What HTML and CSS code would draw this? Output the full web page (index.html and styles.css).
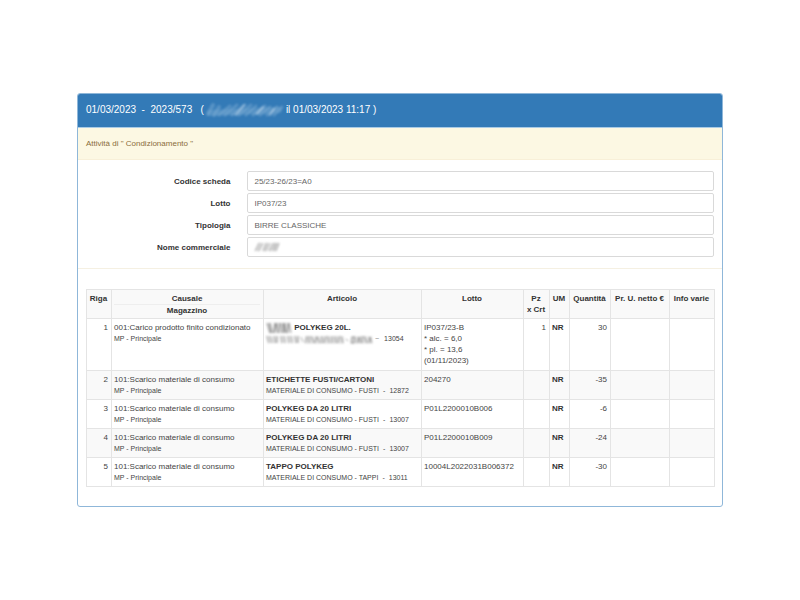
FILE: index.html
```html
<!DOCTYPE html>
<html lang="it">
<head>
<meta charset="utf-8">
<meta name="viewport" content="width=device-width, initial-scale=1">
<title>Scheda 2023/573</title>
<link rel="stylesheet" href="styles.css">
</head>
<body>
<main class="panel">
  <h1 class="panel-heading">01/03/2023 &nbsp;-&nbsp; 2023/573 &nbsp; (<svg class="mask mask-user" viewBox="0 0 80 16" aria-hidden="true"><g fill="none" stroke="#8fb8dc" stroke-linecap="round"><path d="M3 12L8 3M9 13L14 5" stroke-width="4" opacity=".4"/><path d="M5 11L74 8" stroke-width="6" opacity=".3"/><path d="M14 13L25 4M20 13L32 3M27 13L40 3M34 13L46 3M41 13L51 4M48 13L60 4M55 13L65 5M62 13L72 5M69 13L77 5" stroke-width="3" opacity=".4"/><path d="M31 13L39 3M52 12L58 5M65 13L69 7" stroke="#e3eef8" stroke-width="2" opacity=".45"/></g></svg>il 01/03/2023 11:17 )</h1>
  <p class="notice">Attività di " Condizionamento "</p>
  <form class="details">
    <div class="field"><label for="codice">Codice scheda</label><input id="codice" type="text" value="25/23-26/23=A0" readonly></div>
    <div class="field"><label for="lotto">Lotto</label><input id="lotto" type="text" value="IP037/23" readonly></div>
    <div class="field"><label for="tipologia">Tipologia</label><input id="tipologia" type="text" value="BIRRE CLASSICHE" readonly></div>
    <div class="field"><label for="nome">Nome commerciale</label><div class="masked-input"><input id="nome" type="text" readonly><svg class="mask mask-name" viewBox="0 0 26 12" aria-hidden="true"><g fill="none" stroke="#888"><path d="M1 10L5 2M5 10L9 2M9 10L12 2M12 10L16 2M15 10L19 2M19 10L22 2M22 10L25 2" opacity=".75"/><path d="M3 10L7 2M10 10L14 2M16 10L21 2M20 10L24 2" stroke-width="3" opacity=".3"/></g></svg></div></div>
  </form>
  <div class="table-wrap">
    <table>
      <colgroup><col class="c-riga"><col class="c-causale"><col class="c-articolo"><col class="c-lotto"><col class="c-pz"><col class="c-um"><col class="c-qta"><col class="c-prezzo"><col class="c-info"></colgroup>
      <thead>
        <tr><th>Riga</th><th><span class="split">Causale</span>Magazzino</th><th>Articolo</th><th>Lotto</th><th>Pz<br>x Crt</th><th>UM</th><th>Quantità</th><th>Pr. U. netto €</th><th>Info varie</th></tr>
      </thead>
      <tbody>
        <tr class="tall"><td class="num">1</td><td>001:Carico prodotto finito condizionato<small>MP - Principale</small></td><td><b><svg class="mask mask-item" viewBox="0 0 26 12" aria-hidden="true"><g fill="none" stroke="#555"><path d="M1 1L4 11M4 1L6 11M8 11L10 1M10 1L12 11M14 1L15 11M17 11L18 1M18 1L20 11M22 11L23 1M23 1L25 11" opacity=".65"/><path d="M3 1L5 11M9 1L8 11M13 1L12 11M16 1L18 11M21 1L20 11" stroke-width="3" opacity=".3"/></g></svg> POLYKEG 20L.</b><small><svg class="mask mask-category" viewBox="0 0 106 9" aria-hidden="true"><g fill="none" stroke="#777"><path d="M1 1L3 8M4 1L6 8M8 1L9 8M11 1V8M15 1L16 8M18 1L19 8M22 1L23 8M25 1L26 8M29 1L30 8M32 1V8" stroke-width="2" opacity=".5"/><path d="M35 2L37 7M39 8L41 1M43 1V8M45 1L48 8M51 1L49 8M51 2L54 8M56 1V8M60 1L58 8M62 1L63 8M66 1V8M69 1L70 8M73 1L72 8M75 1L77 8" opacity=".65"/><path d="M80 4L82 6M85 8L86 2L89 2L88 8ZM91 8L93 2L94 8M96 1V8M98 1L101 8M103 8L104 2L106 8" opacity=".75"/><path d="M39 5H78M85 5H106" stroke-width="7" opacity=".22"/></g></svg><i class="dash">~</i>13054</small></td><td>IP037/23-B<br>* alc. = 6,0<br>* pl. = 13,6<br>(01/11/2023)</td><td class="num">1</td><td><b>NR</b></td><td class="num">30</td><td></td><td></td></tr>
        <tr><td class="num">2</td><td>101:Scarico materiale di consumo<small>MP - Principale</small></td><td><b>ETICHETTE FUSTI/CARTONI</b><small>MATERIALE DI CONSUMO - FUSTI<span class="sep">-</span>12872</small></td><td>204270</td><td></td><td><b>NR</b></td><td class="num">-35</td><td></td><td></td></tr>
        <tr><td class="num">3</td><td>101:Scarico materiale di consumo<small>MP - Principale</small></td><td><b>POLYKEG DA 20 LITRI</b><small>MATERIALE DI CONSUMO - FUSTI<span class="sep">-</span>13007</small></td><td>P01L2200010B006</td><td></td><td><b>NR</b></td><td class="num">-6</td><td></td><td></td></tr>
        <tr><td class="num">4</td><td>101:Scarico materiale di consumo<small>MP - Principale</small></td><td><b>POLYKEG DA 20 LITRI</b><small>MATERIALE DI CONSUMO - FUSTI<span class="sep">-</span>13007</small></td><td>P01L2200010B009</td><td></td><td><b>NR</b></td><td class="num">-24</td><td></td><td></td></tr>
        <tr><td class="num">5</td><td>101:Scarico materiale di consumo<small>MP - Principale</small></td><td><b>TAPPO POLYKEG</b><small>MATERIALE DI CONSUMO - TAPPI<span class="sep">-</span>13011</small></td><td>10004L2022031B006372</td><td></td><td><b>NR</b></td><td class="num">-30</td><td></td><td></td></tr>
      </tbody>
    </table>
  </div>
</main>
</body>
</html>
```
FILE: styles.css
```css
* { box-sizing: border-box; }
body {
  margin: 0;
  padding: 93px 77px;
  background: #fff;
  color: #444;
  font: 8px/11px "Liberation Sans", Arial, sans-serif;
}
.panel {
  border: 1px solid #8fb7d9;
  border-radius: 3px;
  overflow: hidden;
}
.panel-heading {
  margin: -1px -1px 0;
  padding: 10px 9px;
  background: #337ab7;
  border-bottom: 1px solid #a9cbe6;
  color: #fff;
  font-size: 10px;
  font-weight: 400;
  line-height: 14px;
  white-space: nowrap;
}
.mask { display: inline-block; overflow: visible; filter: blur(1px); }
.mask-user { width: 80px; height: 16px; margin: -2px 1px; vertical-align: middle; }
.notice {
  margin: 0;
  padding: 10px 8px;
  background: #fcf8e3;
  border-bottom: 1px solid #f8f0d8;
  color: #8a6d3b;
  line-height: 11px;
}
.details {
  display: grid;
  gap: 2px;
  padding: 11px 8px;
  border-bottom: 1px solid #f5f0e2;
}
.field {
  display: grid;
  grid-template-columns: 23% 1fr;
  column-gap: 17px;
  align-items: center;
}
label { text-align: right; font-weight: 700; color: #333; }
input {
  display: block;
  width: 100%;
  height: 20px;
  padding: 0 6px;
  border: 1px solid #d9d9d9;
  border-radius: 2px;
  background: #fff;
  color: #666;
  font: inherit;
}
.masked-input { position: relative; }
.mask-name { position: absolute; left: 7px; top: 4px; width: 26px; height: 12px; }
.table-wrap { padding: 20px 8px 19px; }
table { width: 100%; border-collapse: collapse; table-layout: fixed; }
.c-riga { width: 25px; }
.c-causale { width: 152px; }
.c-articolo { width: 158px; }
.c-lotto { width: 102px; }
.c-pz { width: 26px; }
.c-um { width: 20px; }
.c-qta { width: 41px; }
.c-prezzo { width: 59px; }
.c-info { width: 45px; }
th, td {
  padding: 3px 3px 3px 2px;
  border: 1px solid #e4e4e4;
  text-align: left;
  vertical-align: top;
  white-space: nowrap;
}
th { padding-bottom: 2px; text-align: center; color: #333; background: #f9f9f9; }
.split { display: block; border-bottom: 1px solid #eee; }
tbody tr:nth-child(even) { background: #f9f9f9; }
.tall { height: 52px; }
.num { text-align: right; }
b { color: #333; }
small { display: block; font-size: 7px; }
.mask-item { width: 26px; height: 12px; margin: -2px 0; vertical-align: middle; }
.mask-category { width: 106px; height: 9px; vertical-align: middle; }
.dash { margin: 0 5px 0 3px; color: #888; }
.sep { margin: 0 4px; }
```
